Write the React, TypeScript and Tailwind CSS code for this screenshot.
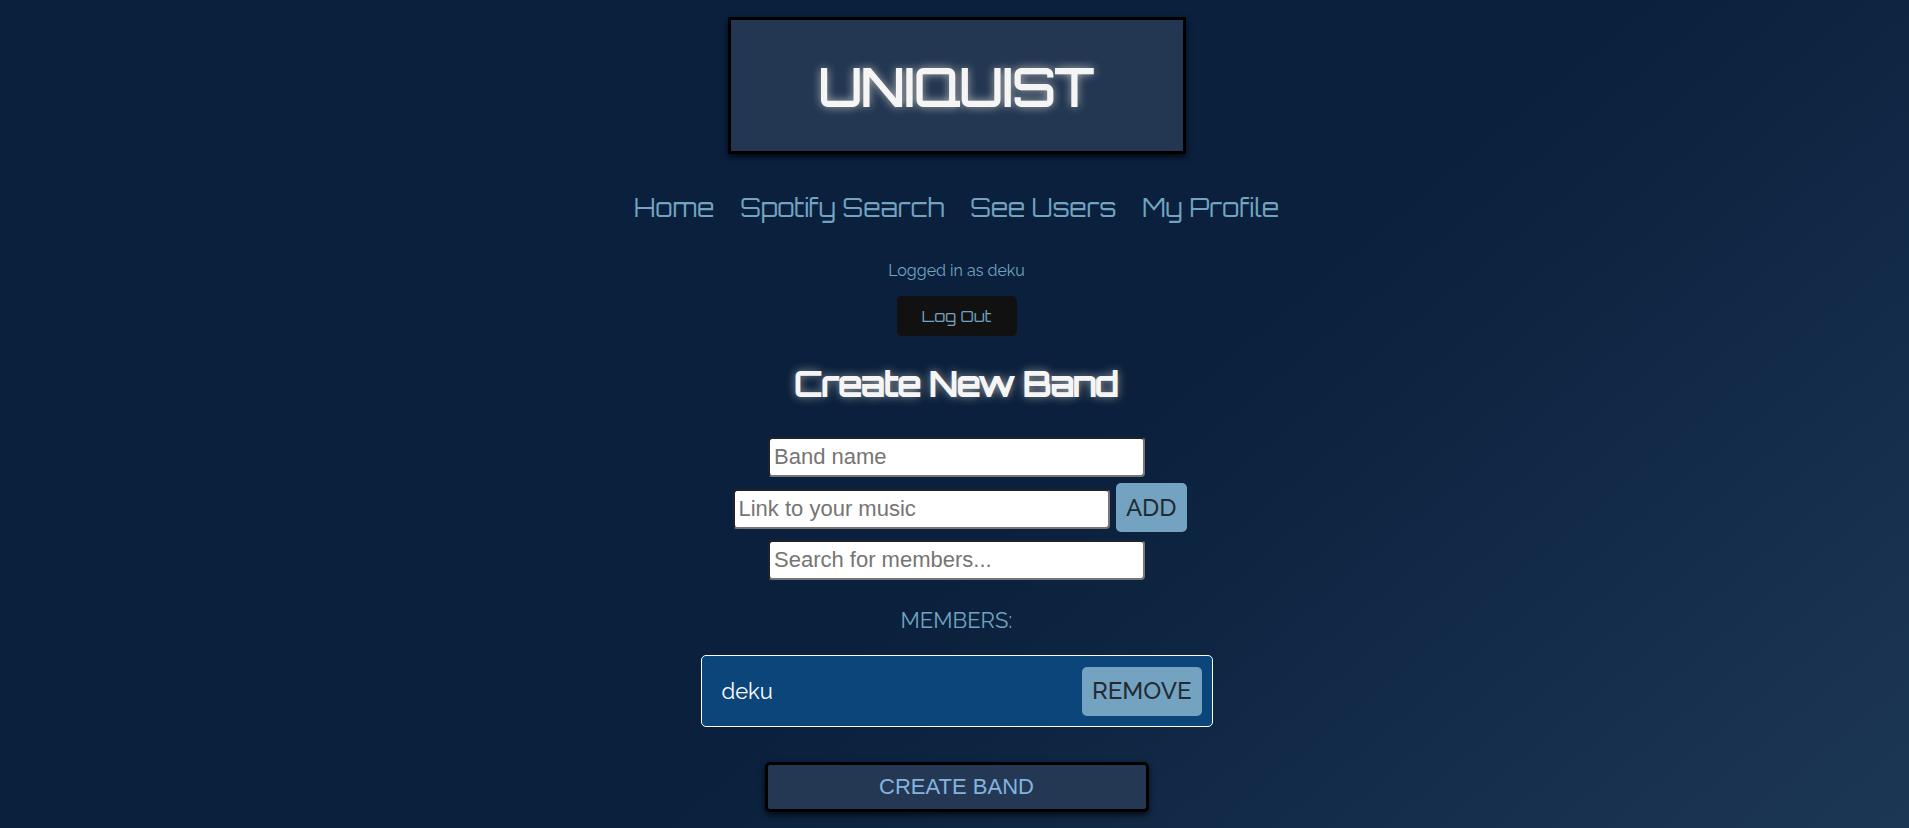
import React from "react";

const field =
  "block h-10 w-full rounded-[4px] border-2 border-t-[#1e222b] border-l-[#1e222b] border-r-[#767676] border-b-[#767676] bg-white px-1 font-['Liberation_Sans',sans-serif] text-[22px] leading-7 text-black placeholder:text-[#757575] placeholder:opacity-100";
const smallButton =
  "h-[49px] shrink-0 rounded-[5px] bg-[#73a3c1] px-[10px] font-['Raleway','Lato',sans-serif] text-2xl font-medium text-[#222b33] uppercase";

const links = ["Home", "Spotify Search", "See Users", "My Profile"];

function Header() {
  return (
    <header className="w-full max-w-[458px] border-[3px] border-black bg-[#233753] pt-9 pb-[35px] text-center shadow-[0_3px_6px_rgba(0,0,0,0.7)]">
      <h1 className="font-['Orbitron','DejaVu_Sans',sans-serif] text-[51px] leading-[60px] font-normal text-[#f5f5f5] [-webkit-text-stroke:2px_#f5f5f5] [text-shadow:0_0_10px_#f4ecd8]">
        UNIQUIST
      </h1>
    </header>
  );
}

function Nav() {
  return (
    <nav className="mt-9 flex flex-wrap justify-center gap-x-[26px] font-['Orbitron','DejaVu_Sans',sans-serif] text-[25px] leading-9 font-normal text-[#73a3c1]">
      {links.map((label) => (
        <a key={label} href="#">
          {label}
        </a>
      ))}
    </nav>
  );
}

function Members() {
  return (
    <section className="mt-6 flex w-full max-w-lg flex-col items-center">
      <h3 className="text-[22px] leading-8 font-normal text-[#73a3c1]">MEMBERS:</h3>
      <ul className="mt-[19px] w-full">
        <li className="flex h-[72px] items-center justify-between rounded-[5px] border border-white bg-[#0c457a] pr-[10px] pl-5 text-[22px] text-white">
          <span>deku</span>
          <button type="button" className={smallButton}>
            Remove
          </button>
        </li>
      </ul>
    </section>
  );
}

export default function App() {
  return (
    <div className="flex min-h-screen flex-col items-center bg-[linear-gradient(140deg,#0a203d_0%,#0a203d_56%,#1c3754_100%)] pt-[17px] pr-4 pb-4 pl-5 font-['Raleway','Lato',sans-serif]">
      <Header />
      <Nav />
      <p className="mt-[33px] text-base leading-6 font-normal text-[#73a3c1]">Logged in as deku</p>
      <button
        type="button"
        className="mt-[13px] h-10 w-[120px] rounded-[5px] bg-[#111111] font-['Orbitron','DejaVu_Sans',sans-serif] text-base font-normal text-[#73a3c1]"
      >
        Log Out
      </button>
      <h2 className="mt-7 text-center font-['Orbitron','DejaVu_Sans',sans-serif] text-[33px] leading-10 font-normal text-[#f5f5f5] [-webkit-text-stroke:2px_#f5f5f5] [text-shadow:0_0_10px_#f4ecd8]">
        Create New Band
      </h2>
      <form className="mt-[33px] flex w-full flex-col items-center" onSubmit={(e) => e.preventDefault()}>
        <div className="w-full max-w-[377px]">
          <input aria-label="Band name" placeholder="Band name" className={field} />
        </div>
        <div className="mt-[6px] flex w-full max-w-[460px] items-baseline gap-[6px] pl-[6px]">
          <input aria-label="Link to your music" placeholder="Link to your music" className={field} />
          <button type="button" className={smallButton}>
            Add
          </button>
        </div>
        <div className="mt-2 w-full max-w-[377px]">
          <input aria-label="Search for members" placeholder="Search for members..." className={field} />
        </div>
        <Members />
        <button
          type="submit"
          className="mt-[35px] h-[50px] w-full max-w-96 rounded-[5px] border-[3px] border-black bg-[#253853] pb-[2px] font-['Liberation_Sans',sans-serif] text-[22px] text-[#82b4e0] uppercase shadow-[0_3px_6px_rgba(0,0,0,0.7)]"
        >
          Create Band
        </button>
      </form>
    </div>
  );
}
